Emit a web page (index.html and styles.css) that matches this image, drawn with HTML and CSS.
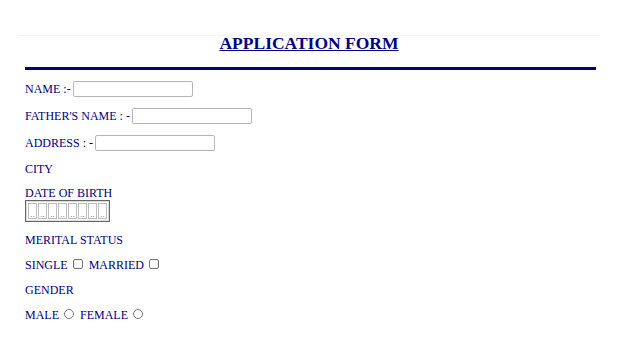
FILE: index.html
```html
<!DOCTYPE html>
<html lang="en">
<head>
    <meta charset="UTF-8">
    <meta name="viewport" content="width=device-width, initial-scale=1.0">
    <title>Application Form</title>
    <link rel="stylesheet" href="styles.css">
</head>
<body>
  <div class="frame">
      <h2 class="titulo">APPLICATION FORM</h2>
      <div class="linha"></div>
  </div>

  <form class="form">
      <div class="row r1">NAME :-<input type="text" class="campo"></div>
      <div class="row r2">FATHER'S NAME : -<input type="text" class="campo"></div>
      <div class="row r3">ADDRESS : -<input type="text" class="campo"></div>
      <div class="row r4">CITY</div>
      <div class="label-dob">DATE OF BIRTH</div>
      <div class="dob">
          <span class="seg">..</span><span class="seg">..</span><span class="seg">..</span><span class="seg">..</span><span class="seg">..</span><span class="seg">..</span><span class="seg">..</span><span class="seg">..</span>
      </div>
      <div class="row r5">MERITAL STATUS</div>
      <div class="row r6">SINGLE<span class="check"></span>MARRIED<span class="check"></span></div>
      <div class="row r6">GENDER</div>
      <div class="row r6">MALE<span class="radio"></span>FEMALE<span class="radio"></span></div>
  </form>
</body>
</html>
```

FILE: styles.css
```css
body { font-family: "Liberation Serif", "Times New Roman", serif; color: #000080; background-color: #fff; margin: 0; padding: 0; }
.frame { margin: 35px 0 0 18px; width: 582px; border-top: 1px solid #f3f3f3; }
.titulo { font-size: 17.5px; font-weight: bold; text-decoration: underline; text-align: center; margin: 0; height: 31px; line-height: 15px; }
.linha { height: 3px; background-color: #000080; margin: 0 4px 0 7px; }
.form { padding-left: 25px; font-size: 12px; }
.row { height: 22px; display: flex; align-items: center; }
.r1 { margin-top: 8px; }
.r2, .r3 { margin-top: 5px; }
.r4 { margin-top: 4px; }
.r5 { margin-top: 7px; }
.r6 { margin-top: 3px; }
.campo { width: 120px; height: 16px; box-sizing: border-box; border: 1px solid #b5b5b5; border-radius: 2px; margin: 0 0 0 2px; padding: 0; }
.label-dob { margin-top: 6px; height: 14px; line-height: 14px; }
.dob { display: flex; width: 85px; height: 22px; box-sizing: border-box; border: 1px solid #666; outline: 1px solid #ddd; outline-offset: -2px; padding: 2px; gap: 1px; }
.seg { flex: 1; border: 1px solid #bbb; font-size: 9px; line-height: 20px; color: #666; text-align: center; overflow: hidden; }
.check { display: inline-block; width: 8px; height: 8px; border: 1px solid #777; border-radius: 2px; margin: 0 6px 3px 5px; }
.radio { display: inline-block; width: 8px; height: 8px; border: 1px solid #777; border-radius: 50%; margin: 0 6px 3px 5px; }
```
